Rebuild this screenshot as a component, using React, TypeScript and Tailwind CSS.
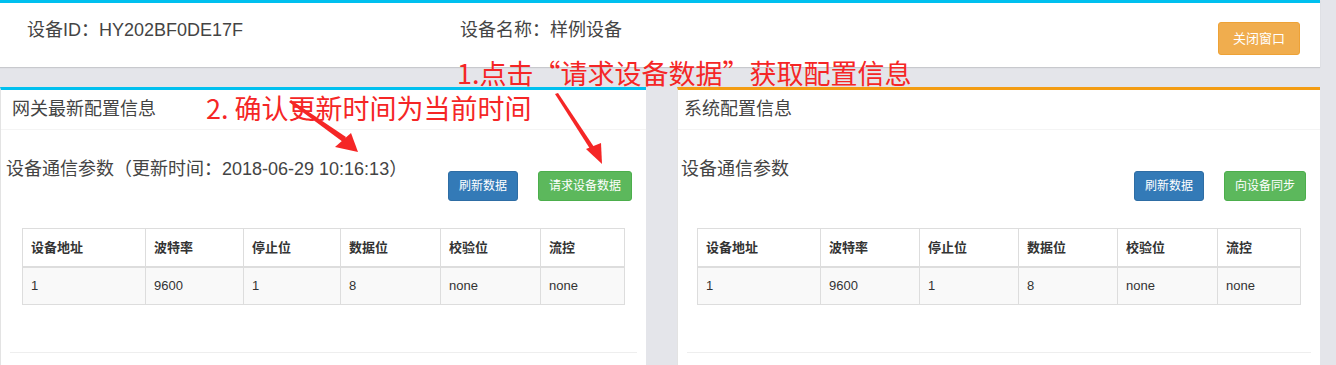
const COLS = ["设备地址", "波特率", "停止位", "数据位", "校验位", "流控"];
const ROW = ["1", "9600", "1", "8", "none", "none"];

function ParamTable({ widths }: { widths: number[] }) {
  return (
    <table className="border-collapse text-[13px] text-[#333]">
      <thead>
        <tr className="h-[38px]">
          {COLS.map((c, i) => (
            <th
              key={c}
              style={{ width: widths[i] }}
              className="border border-b-2 border-[#ddd] px-2 text-left font-bold"
            >
              {c}
            </th>
          ))}
        </tr>
      </thead>
      <tbody>
        <tr className="h-[38px] bg-[#f9f9f9]">
          {ROW.map((v, i) => (
            <td key={i} className="border border-[#ddd] px-2">
              {v}
            </td>
          ))}
        </tr>
      </tbody>
    </table>
  );
}

function Panel({
  title,
  heading,
  action,
  accent,
  widths,
  width,
  headPad,
  bodyPad,
  tableMargin,
}: {
  title: string;
  heading: string;
  action: string;
  accent: string;
  widths: number[];
  width: string;
  headPad: string;
  bodyPad: string;
  tableMargin: string;
}) {
  return (
    <section className={`${width} h-[278px] border-t-[3px] ${accent} border-l border-l-[#e3e3e3] bg-white`}>
      <div className={`flex h-[40px] items-center border-b border-[#f4f4f4] ${headPad} text-[18px] text-[#444]`}>
        {title}
      </div>
      <div className={`flex justify-between ${bodyPad} pr-[14px] pt-[27px]`}>
        <h4 className="text-[18px] leading-[24px] text-[#444]">{heading}</h4>
        <div className="mt-[14px] flex gap-[20px]">
          <button className="h-[30px] rounded-[3px] border border-[#2e6da4] bg-[#337ab7] px-[10px] text-[12px] text-white">
            刷新数据
          </button>
          <button className="h-[30px] rounded-[3px] border border-[#4cae4c] bg-[#5cb85c] px-[10px] text-[12px] text-white">
            {action}
          </button>
        </div>
      </div>
      <div className={`mt-[27px] ${tableMargin}`}>
        <ParamTable widths={widths} />
      </div>
      <div className="mx-[9px] mt-[47px] border-t border-[#eee]" />
    </section>
  );
}

export default function App() {
  return (
    <div
      className="relative h-[365px] w-[1336px] overflow-hidden bg-[#e4e5ea]"
      style={{ fontFamily: '"Liberation Sans", "Noto Sans CJK SC", sans-serif' }}
    >
      <header className="flex h-[67px] w-[1320px] items-start border-t-[3px] border-[#00c0ef] bg-white shadow-[0_1px_1px_rgba(0,0,0,0.12)]">
        <div className="w-[460px] pl-[27px] pt-[15px] text-[18px] leading-[24px] text-[#444]">
          设备ID：HY202BF0DE17F
        </div>
        <div className="flex-1 pt-[15px] text-[18px] leading-[24px] text-[#444]">设备名称：样例设备</div>
        <button className="mr-[20px] mt-[19px] h-[33px] w-[82px] rounded-[3px] border border-[#eea236] bg-[#f0ad4e] text-[13px] text-white">
          关闭窗口
        </button>
      </header>

      <div className="mt-[20px] flex gap-[31px]">
        <Panel
          title="网关最新配置信息"
          heading="设备通信参数（更新时间：2018-06-29 10:16:13）"
          action="请求设备数据"
          accent="border-t-[#00c0ef]"
          widths={[123, 98, 97, 100, 100, 84]}
          width="w-[646px]"
          headPad="pl-[11px]"
          bodyPad="pl-[5px]"
          tableMargin="ml-[21px]"
        />
        <Panel
          title="系统配置信息"
          heading="设备通信参数"
          action="向设备同步"
          accent="border-t-[#f39c12]"
          widths={[123, 99, 99, 99, 100, 83]}
          width="w-[643px]"
          headPad="pl-[6px]"
          bodyPad="pl-[3px]"
          tableMargin="ml-[19px]"
        />
      </div>

      {/* red annotations drawn over the screenshot */}
      <div
        className="absolute left-[457px] top-[56px] whitespace-nowrap text-[27px] leading-[34px] text-[#f52626]"
        style={{ fontFamily: '"Noto Sans CJK SC", sans-serif' }}
      >
        1.点击“请求设备数据”获取配置信息
      </div>
      <div
        className="absolute left-[206px] top-[91px] whitespace-nowrap text-[27px] leading-[34px] text-[#f52626]"
        style={{ fontFamily: '"Noto Sans CJK SC", sans-serif' }}
      >
        2. 确认更新时间为当前时间
      </div>
      <svg className="pointer-events-none absolute left-0 top-0" width="1336" height="365">
        <g fill="#f52626">
          <polygon points="289,102 291,100 346,137 343,142" />
          <polygon points="358,152 335,147 351,133" />
          <polygon points="555,94 558,93 596,150 592,152" />
          <polygon points="602,164 586,149 601,143" />
        </g>
      </svg>
    </div>
  );
}
